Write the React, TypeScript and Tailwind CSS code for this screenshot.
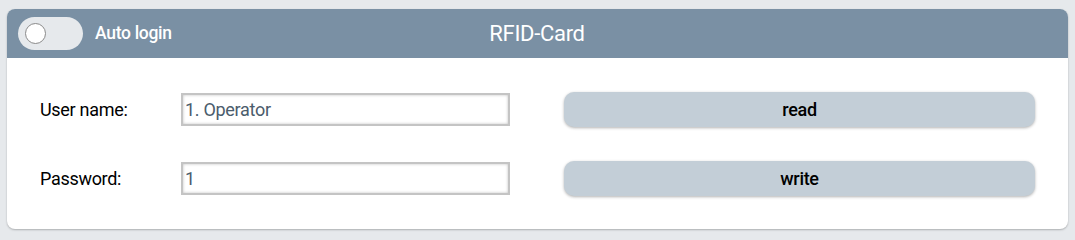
export default function App() {
  return (
    <div className="w-[1075px] h-[240px] bg-[#e6e9ec] pt-[9px] pl-[7px] font-['Roboto',sans-serif]">
      <div className="w-[1061px] h-[220px] bg-white rounded-[8px] overflow-hidden shadow-[0_1px_2px_rgba(0,0,0,0.25)]">
        <div className="relative h-[49px] bg-[#7a90a4] flex items-center px-[11px]">
          <div className="w-[65px] h-[33px] rounded-full bg-[#e6e9ec] flex items-center pl-[7px]">
            <div className="w-[21px] h-[21px] rounded-full bg-white border border-[#8a8a8a]" />
          </div>
          <span className="ml-[12px] text-white text-[17.5px] font-medium tracking-[-0.3px]">Auto login</span>
          <div className="absolute inset-0 flex items-center justify-center pointer-events-none">
            <span className="text-white text-[22px] tracking-[-0.3px] ml-[-1px]">RFID-Card</span>
          </div>
        </div>
        <div className="pl-[33px] pr-[33px] pt-[34px] flex flex-col gap-[34px]">
          <Row label="User name:" value="1. Operator" action="read" />
          <Row label="Password:" value="1" action="write" />
        </div>
      </div>
    </div>
  );
}

function Row({ label, value, action }: { label: string; value: string; action: string }) {
  return (
    <div className="flex items-center h-[35px] text-[18px] tracking-[-0.3px]">
      <span className="w-[141px] text-black">{label}</span>
      <div className="w-[329px] h-[33px] border-2 border-[#c4c4c4] shadow-[inset_0_0_3px_rgba(0,0,0,0.25)] flex items-center pl-[2px] text-[#4b5c6c]">
        {value}
      </div>
      <button className="ml-[54px] flex-1 h-[35px] rounded-[10px] bg-[#c3ced7] shadow-[0_1px_3px_rgba(0,0,0,0.3)] font-medium text-black">
        {action}
      </button>
    </div>
  );
}
